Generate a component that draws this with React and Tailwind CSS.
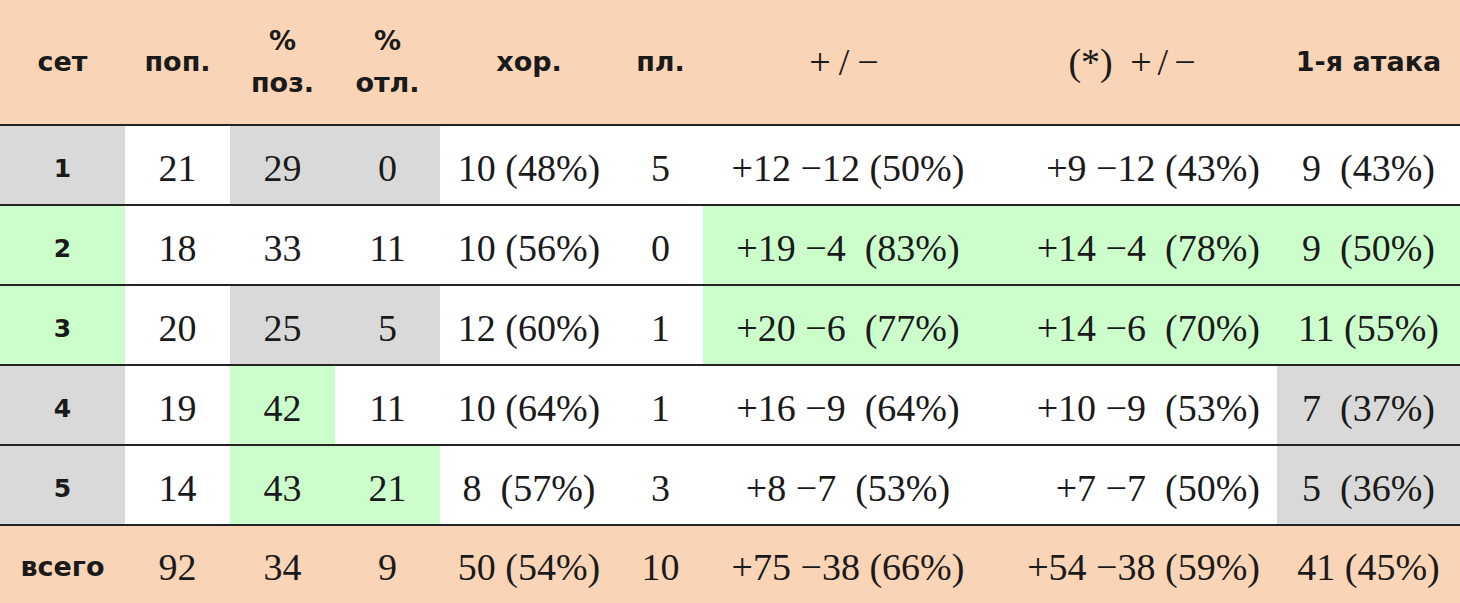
import React from "react";

const PEACH = "bg-[#f9d4b6]";

// column widths: сет, поп., поз., отл., хор., пл., +/-, (*) +/-, 1-я атака
const grid =
  "grid grid-cols-[125px_105px_105px_105px_178px_85px_290px_284px_183px]";

const rows = [
  {
    label: "1",
    cells: ["21", "29", "0", "10 (48%)", "5", "+12 −12 (50%)", "+9 −12 (43%)", "9  (43%)"],
    bg: ["bg-[#d9d9d9]", "bg-white", "bg-[#d9d9d9]", "bg-[#d9d9d9]", "bg-white", "bg-white", "bg-white", "bg-white", "bg-white"],
  },
  {
    label: "2",
    cells: ["18", "33", "11", "10 (56%)", "0", "+19 −4  (83%)", "+14 −4  (78%)", "9  (50%)"],
    bg: ["bg-[#ccfecc]", "bg-white", "bg-white", "bg-white", "bg-white", "bg-white", "bg-[#ccfecc]", "bg-[#ccfecc]", "bg-[#ccfecc]"],
  },
  {
    label: "3",
    cells: ["20", "25", "5", "12 (60%)", "1", "+20 −6  (77%)", "+14 −6  (70%)", "11 (55%)"],
    bg: ["bg-[#ccfecc]", "bg-white", "bg-[#d9d9d9]", "bg-[#d9d9d9]", "bg-white", "bg-white", "bg-[#ccfecc]", "bg-[#ccfecc]", "bg-[#ccfecc]"],
  },
  {
    label: "4",
    cells: ["19", "42", "11", "10 (64%)", "1", "+16 −9  (64%)", "+10 −9  (53%)", "7  (37%)"],
    bg: ["bg-[#d9d9d9]", "bg-white", "bg-[#ccfecc]", "bg-white", "bg-white", "bg-white", "bg-white", "bg-white", "bg-[#d9d9d9]"],
  },
  {
    label: "5",
    cells: ["14", "43", "21", "8  (57%)", "3", "+8 −7  (53%)", "+7 −7  (50%)", "5  (36%)"],
    bg: ["bg-[#d9d9d9]", "bg-white", "bg-[#ccfecc]", "bg-[#ccfecc]", "bg-white", "bg-white", "bg-white", "bg-white", "bg-[#d9d9d9]"],
  },
];

const total = ["92", "34", "9", "50 (54%)", "10", "+75 −38 (66%)", "+54 −38 (59%)", "41 (45%)"];

const sans = "font-['DejaVu_Sans',sans-serif] font-bold text-[27px] text-[#1a1a1a]";
const serif = "font-['Liberation_Serif',serif] text-[38px] text-[#1a1a1a] whitespace-pre";

function DataCell({ value, index, bg }) {
  // the (*) column is right-aligned in the source table
  const align = index === 6 ? "justify-end pr-[17px]" : "justify-center";
  return (
    <div className={`flex items-center pt-[5px] ${align} ${bg} ${serif}`}>
      <span className="leading-none">{value}</span>
    </div>
  );
}

export default function App() {
  return (
    <div className="w-[1460px] h-[603px] overflow-hidden bg-white">
      {/* header */}
      <div className={`${grid} h-[124px] ${PEACH}`}>
        <div className={`flex items-center justify-center ${sans}`}>сет</div>
        <div className={`flex items-center justify-center ${sans}`}>поп.</div>
        <div className={`flex flex-col items-center justify-center leading-[42px] ${sans}`}>
          <span>%</span>
          <span>поз.</span>
        </div>
        <div className={`flex flex-col items-center justify-center leading-[42px] ${sans}`}>
          <span>%</span>
          <span>отл.</span>
        </div>
        <div className={`flex items-center justify-center ${sans}`}>хор.</div>
        <div className={`flex items-center justify-center ${sans}`}>пл.</div>
        <div className={`flex items-center justify-center ${serif} tracking-[8px]`}>+/−</div>
        <div className={`flex items-center justify-center ${serif}`}>
          (*) <span className="tracking-[6px] ml-2">+/−</span>
        </div>
        <div className={`flex items-center justify-center ${sans} text-[26px]`}>1-я атака</div>
      </div>

      {rows.map((row) => (
        <div key={row.label} className={`${grid} h-[80px] border-t-2 border-[#232323]`}>
          <div className={`flex items-center justify-center pt-[8px] ${row.bg[0]} font-['DejaVu_Sans',sans-serif] font-bold text-[25px] text-[#1a1a1a]`}>
            {row.label}
          </div>
          {row.cells.map((c, i) => (
            <DataCell key={i} value={c} index={i} bg={row.bg[i + 1]} />
          ))}
        </div>
      ))}

      {/* total */}
      <div className={`${grid} h-[79px] border-t-2 border-[#232323] ${PEACH}`}>
        <div className={`flex items-center justify-center pt-[6px] ${sans} text-[25px]`}>всего</div>
        {total.map((c, i) => (
          <DataCell key={i} value={c} index={i} bg="" />
        ))}
      </div>
    </div>
  );
}
